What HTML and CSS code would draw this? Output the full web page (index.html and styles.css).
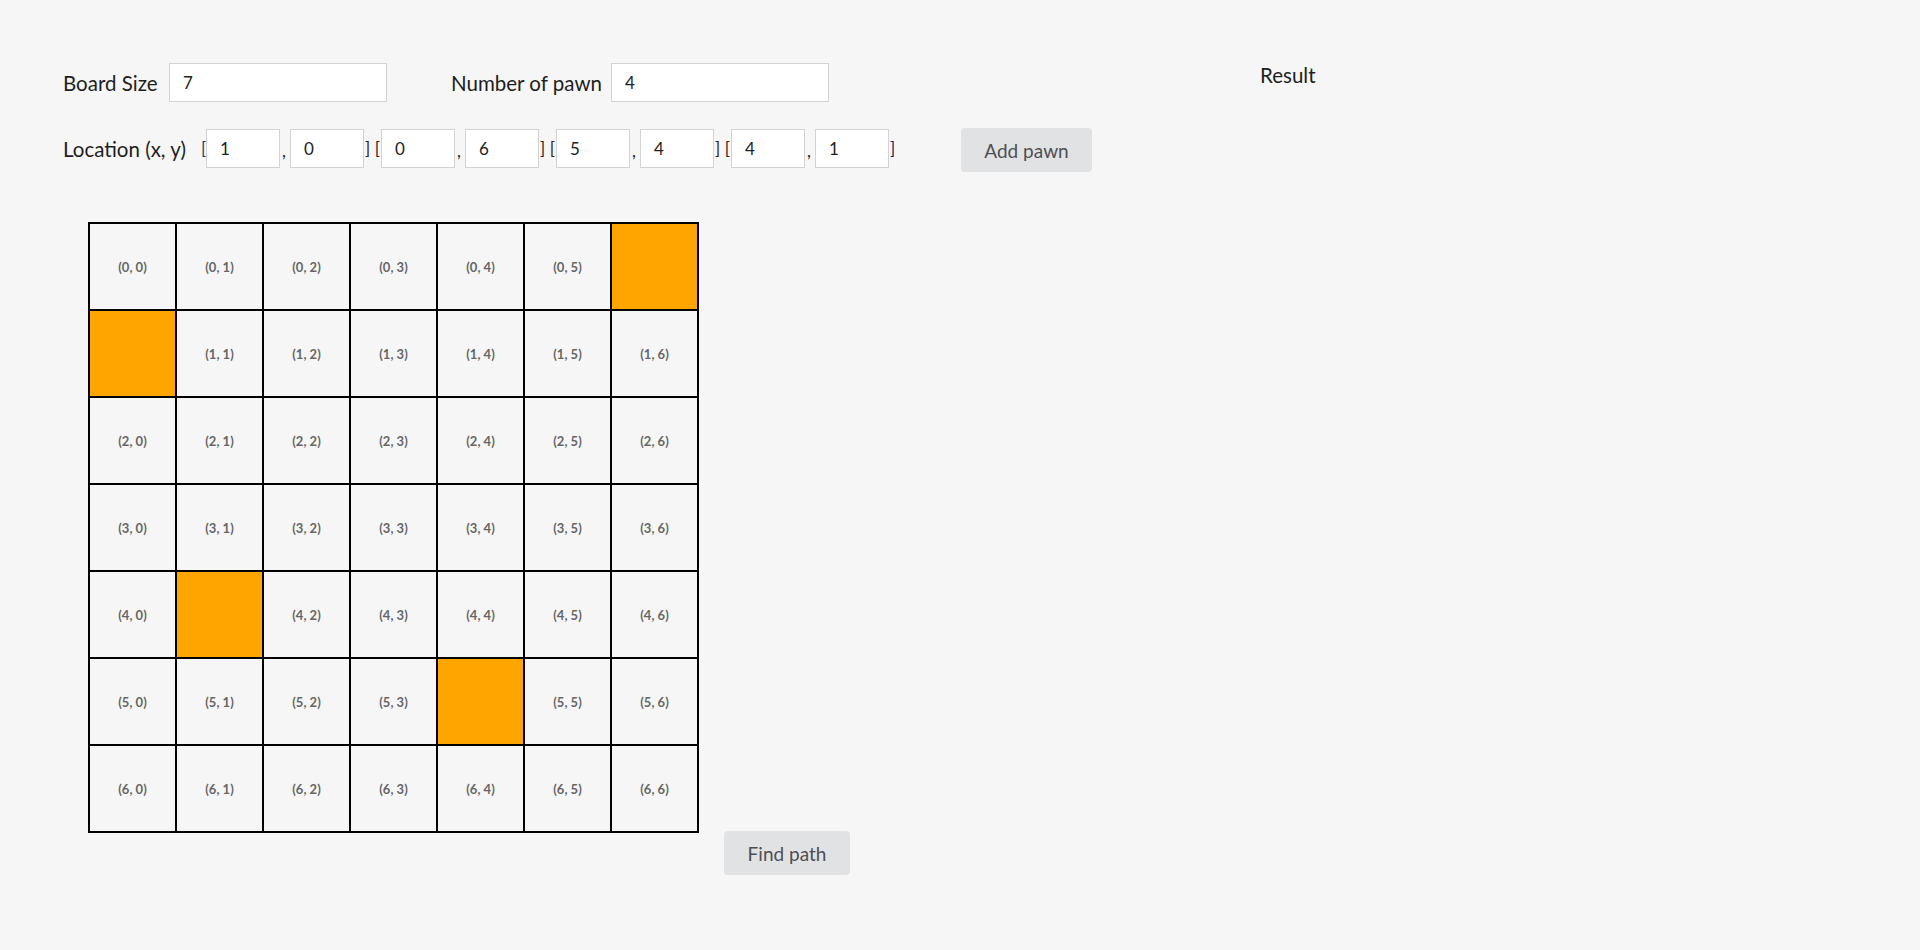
FILE: index.html
```html
<!DOCTYPE html>
<html lang="en">
<head>
<meta charset="utf-8">
<title>Pawn path</title>
<link rel="stylesheet" href="styles.css">
</head>
<body>
<div class="page">
  <div class="controls">
    <div class="row row-top">
      <label class="lbl lbl-size">Board Size</label>
      <input class="field field-wide" type="text" value="7">
      <label class="lbl lbl-num">Number of pawn</label>
      <input class="field field-wide" type="text" value="4">
    </div>
    <div class="row row-loc">
      <label class="lbl lbl-loc">Location (x, y)</label>
      <span class="sep open">[</span>
      <input class="field field-small" type="text" value="1">
      <span class="sep comma">,</span>
      <input class="field field-small" type="text" value="0">
      <span class="sep mid">] [</span>
      <input class="field field-small" type="text" value="0">
      <span class="sep comma">,</span>
      <input class="field field-small" type="text" value="6">
      <span class="sep mid">] [</span>
      <input class="field field-small" type="text" value="5">
      <span class="sep comma">,</span>
      <input class="field field-small" type="text" value="4">
      <span class="sep mid">] [</span>
      <input class="field field-small" type="text" value="4">
      <span class="sep comma">,</span>
      <input class="field field-small" type="text" value="1">
      <span class="sep close">]</span>
      <button class="btn btn-add" type="button">Add pawn</button>
    </div>
  </div>
  <div class="result">Result</div>
</div>

<div class="board-area">
  <div class="board">
    <div class="cell">(0, 0)</div><div class="cell">(0, 1)</div><div class="cell">(0, 2)</div><div class="cell">(0, 3)</div><div class="cell">(0, 4)</div><div class="cell">(0, 5)</div><div class="cell pawn"></div>
    <div class="cell pawn"></div><div class="cell">(1, 1)</div><div class="cell">(1, 2)</div><div class="cell">(1, 3)</div><div class="cell">(1, 4)</div><div class="cell">(1, 5)</div><div class="cell">(1, 6)</div>
    <div class="cell">(2, 0)</div><div class="cell">(2, 1)</div><div class="cell">(2, 2)</div><div class="cell">(2, 3)</div><div class="cell">(2, 4)</div><div class="cell">(2, 5)</div><div class="cell">(2, 6)</div>
    <div class="cell">(3, 0)</div><div class="cell">(3, 1)</div><div class="cell">(3, 2)</div><div class="cell">(3, 3)</div><div class="cell">(3, 4)</div><div class="cell">(3, 5)</div><div class="cell">(3, 6)</div>
    <div class="cell">(4, 0)</div><div class="cell pawn"></div><div class="cell">(4, 2)</div><div class="cell">(4, 3)</div><div class="cell">(4, 4)</div><div class="cell">(4, 5)</div><div class="cell">(4, 6)</div>
    <div class="cell">(5, 0)</div><div class="cell">(5, 1)</div><div class="cell">(5, 2)</div><div class="cell">(5, 3)</div><div class="cell pawn"></div><div class="cell">(5, 5)</div><div class="cell">(5, 6)</div>
    <div class="cell">(6, 0)</div><div class="cell">(6, 1)</div><div class="cell">(6, 2)</div><div class="cell">(6, 3)</div><div class="cell">(6, 4)</div><div class="cell">(6, 5)</div><div class="cell">(6, 6)</div>
  </div>
  <button class="btn btn-find" type="button">Find path</button>
</div>
</body>
</html>
```

FILE: styles.css
```css
html, body {
  margin: 0;
  padding: 0;
  background: #f6f6f6;
}

body {
  font-family: Lato, "Liberation Sans", sans-serif;
  color: #1e1e1e;
  width: 1920px;
  height: 950px;
  overflow: hidden;
}

.page {
  display: flex;
  align-items: flex-start;
  padding: 63px 0 0 63px;
}

.controls {
  flex: none;
  width: 1197px;
}

.row {
  display: flex;
  align-items: center;
}

.row-top {
  height: 39px;
}

.row-loc {
  margin-top: 27px;
  height: 39px;
}

.lbl {
  font-size: 20.5px;
  line-height: 24px;
  color: #1e1e1e;
  white-space: nowrap;
  flex: none;
}

.lbl-size {
  width: 106px;
}

.lbl-num {
  margin-left: 64px;
  width: 160px;
}

.lbl-loc {
  width: 138px;
}

.field {
  box-sizing: border-box;
  height: 39px;
  border: 1px solid #d3d3d3;
  background: #ffffff;
  font-family: Lato, "Liberation Sans", sans-serif;
  font-size: 17px;
  color: #222;
  padding: 0 0 0 13px;
  margin: 0;
  outline: none;
  flex: none;
}

.field-wide {
  width: 218px;
}

.field-small {
  width: 74px;
}

.sep {
  font-size: 17px;
  color: #222;
  line-height: 39px;
  white-space: pre;
  box-sizing: border-box;
  flex: none;
}

.sep.open {
  width: 5px;
  color: #1c3f6b;
}

.sep.comma {
  width: 10px;
  padding-left: 2px;
  padding-top: 4px;
}

.sep.mid {
  width: 17px;
  text-align: center;
  color: #3a1f1f;
}

.sep.close {
  width: 5px;
  padding-left: 1px;
  color: #1c2a5a;
}

.btn {
  border: none;
  border-radius: 4px;
  background: #e1e2e4;
  color: #4f4f52;
  font-family: Lato, "Liberation Sans", sans-serif;
  font-size: 19px;
  cursor: pointer;
  padding: 0;
}

.btn-add {
  width: 131px;
  height: 44px;
  margin-left: 67px;
  margin-top: 3px;
}

.result {
  font-size: 20.5px;
  line-height: 24px;
}

.board-area {
  display: flex;
  align-items: flex-start;
  padding: 54px 0 0 88px;
}

.board {
  display: grid;
  grid-template-columns: repeat(7, 87px);
  grid-auto-rows: 87px;
  border-left: 2px solid #000;
  border-top: 2px solid #000;
  flex: none;
}

.cell {
  border-right: 2px solid #000;
  border-bottom: 2px solid #000;
  display: flex;
  align-items: center;
  justify-content: center;
  font-size: 13px;
  font-weight: 700;
  color: #666;
  background: #f6f6f6;
}

.cell.pawn {
  background: #ffa500;
}

.btn-find {
  width: 126px;
  height: 44px;
  margin-left: 25px;
  margin-top: 609px;
}
```
